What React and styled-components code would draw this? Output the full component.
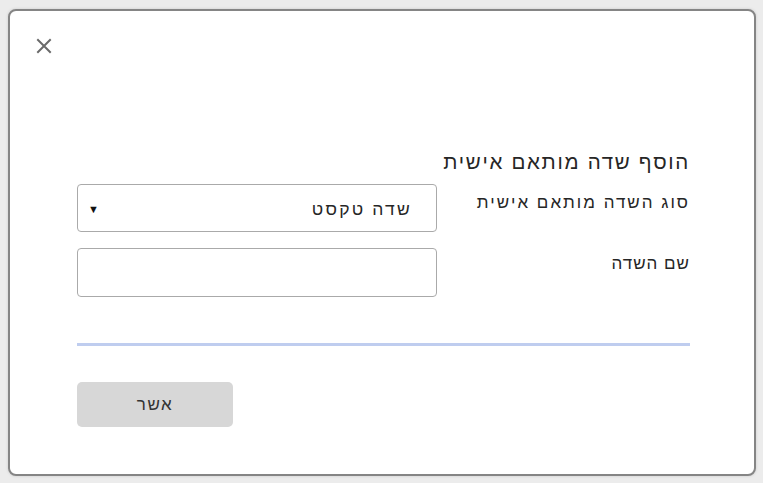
import React from "react";
import styled, { createGlobalStyle } from "styled-components";

const Global = createGlobalStyle`
  html, body { margin: 0; padding: 0; background: #ececec; }
  body { font-family: "Liberation Sans", Arial, "DejaVu Sans", sans-serif; }
  * { box-sizing: border-box; }
`;

const Page = styled.div`
  width: 763px;
  height: 483px;
  padding: 9px 7px 7px 8px;
`;

const Dialog = styled.div`
  width: 748px;
  height: 467px;
  background: #fff;
  border: 2px solid #858585;
  border-radius: 8px;
  box-shadow: 0 0 3px rgba(0, 0, 0, 0.15);
  display: flex;
  flex-direction: column;
`;

const CloseButton = styled.button`
  width: 30px;
  height: 30px;
  margin: 20px 0 0 19px;
  padding: 0;
  border: none;
  background: transparent;
  display: flex;
  align-items: center;
  justify-content: center;
  cursor: pointer;
`;

const Form = styled.div`
  direction: rtl;
  margin: 89px 64px 0 67px;
  display: flex;
  flex-direction: column;
`;

const Title = styled.h2`
  margin: 0;
  font-size: 20.5px;
  line-height: 24px;
  letter-spacing: 1.7px;
  font-weight: normal;
  color: #262626;
`;

const Row = styled.div`
  display: flex;
  justify-content: space-between;
  align-items: flex-start;
  margin-top: ${(p) => p.$top}px;
`;

const Label = styled.label`
  font-size: 17px;
  line-height: 20px;
  letter-spacing: ${(p) => p.$ls}px;
  color: #262626;
  padding-top: ${(p) => p.$pad}px;
`;

const SelectBox = styled.div`
  width: 360px;
  height: 48px;
  border: 1px solid #aaa;
  border-radius: 4px;
  display: flex;
  align-items: center;
  justify-content: space-between;
  padding: 2px 24px 0 10px;
  font-size: 17.5px;
  letter-spacing: 2.2px;
  color: #262626;
`;

const Arrow = styled.span`
  direction: ltr;
  font-size: 11px;
  letter-spacing: 0;
  color: #111;
`;

const TextInput = styled.input`
  width: 360px;
  height: 49px;
  border: 1px solid #aaa;
  border-radius: 4px;
  padding: 0 12px;
  font-size: 15px;
  font-family: inherit;
  direction: rtl;
  outline: none;
`;

const Divider = styled.div`
  margin-top: 46px;
  height: 3px;
  background: #bfcdef;
`;

const ConfirmButton = styled.button`
  align-self: flex-end;
  margin-top: 36px;
  width: 156px;
  height: 45px;
  border: none;
  border-radius: 5px;
  background: #d7d7d7;
  color: #333;
  font-size: 17px;
  letter-spacing: 1.5px;
  font-family: inherit;
  cursor: pointer;
`;

export default function App() {
  return (
    <>
      <Global />
      <Page>
        <Dialog>
          <CloseButton aria-label="close">
            <svg width="16" height="16" viewBox="0 0 16 16">
              <path d="M2 2 L14 14 M14 2 L2 14" stroke="#6a6a6a" strokeWidth="2" strokeLinecap="square" />
            </svg>
          </CloseButton>
          <Form>
            <Title>הוסף שדה מותאם אישית</Title>
            <Row $top={10}>
              <Label $pad={9} $ls={2}>סוג השדה מותאם אישית</Label>
              <SelectBox>
                <span>שדה טקסט</span>
                <Arrow>▼</Arrow>
              </SelectBox>
            </Row>
            <Row $top={16}>
              <Label $pad={6} $ls={1}>שם השדה</Label>
              <TextInput />
            </Row>
            <Divider />
            <ConfirmButton>אשר</ConfirmButton>
          </Form>
        </Dialog>
      </Page>
    </>
  );
}
